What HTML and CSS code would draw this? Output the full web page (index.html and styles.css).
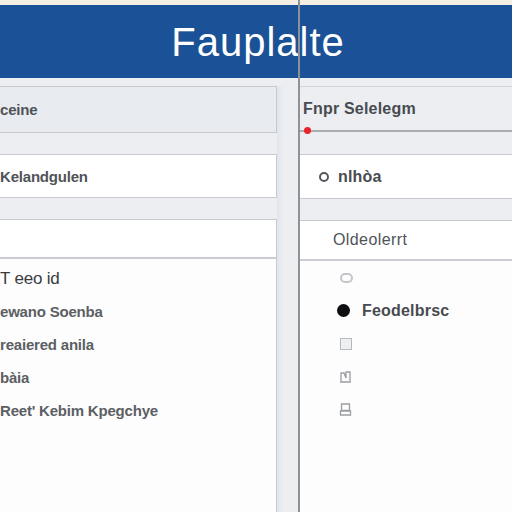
FILE: index.html
```html
<!DOCTYPE html>
<html>
<head>
<meta charset="utf-8">
<link rel="stylesheet" href="styles.css">
</head>
<body>
<div class="strip"></div>
<header class="header"><h1 class="title">Fauplalte</h1></header>
<div class="divider"></div>
<main class="main">
  <section class="left">
    <div class="box box-gray"><span class="label">ceine</span></div>
    <div class="box box-white"><span class="label">Kelandgulen</span></div>
    <div class="box box-list">
      <div class="list-head"></div>
      <ul class="list">
        <li class="item item-dark">T eeo id</li>
        <li class="item">ewano Soenba</li>
        <li class="item">reaiered anila</li>
        <li class="item">bàia</li>
        <li class="item">Reet' Kebim Kpegchye</li>
      </ul>
    </div>
  </section>
  <div class="gutter"></div>
  <section class="right">
    <div class="rbox rbox-gray">
      <span class="rlabel">Fnpr Selelegm</span>
      <div class="slider"><span class="knob"></span></div>
    </div>
    <div class="rbox rbox-white">
      <span class="radio"></span><span class="rlabel">nlhòa</span>
    </div>
    <div class="rbox rbox-list">
      <div class="rlist-head"><span class="rlabel">Oldeolerrt</span></div>
      <ul class="rlist">
        <li class="ritem"><span class="ico ico-pill"></span></li>
        <li class="ritem"><span class="ico ico-dot"></span><span class="rlabel">Feodelbrsc</span></li>
        <li class="ritem"><span class="ico ico-square"></span></li>
        <li class="ritem"><svg class="ico-svg" width="13" height="13" viewBox="0 0 13 13"><path d="M1 12h11M2 11V3h3l2 5V2h4v9" fill="none" stroke="#9a9da2" stroke-width="1.3"/></svg></li>
        <li class="ritem"><svg class="ico-svg" width="13" height="13" viewBox="0 0 13 13"><path d="M2.5 1h8v6.5h-8zM1.5 8h10v4h-10z" fill="none" stroke="#9a9da2" stroke-width="1.3"/></svg></li>
      </ul>
    </div>
  </section>
</main>
</body>
</html>
```
FILE: styles.css
```css
* { box-sizing: border-box; }
html, body { margin: 0; padding: 0; }
body {
  width: 512px;
  height: 512px;
  overflow: hidden;
  background: #eceef1;
  font-family: "Liberation Sans", Arial, sans-serif;
  position: relative;
}
.strip { height: 5px; background: #f4efe4; }
.header {
  height: 73px;
  background: #1b5196;
  display: flex;
  align-items: center;
  justify-content: center;
}
.title {
  margin: 0;
  color: #ffffff;
  font-family: "Liberation Sans", Arial, sans-serif;
  font-weight: normal;
  font-size: 40px;
  letter-spacing: 1px;
  padding-left: 4px;
  padding-top: 2px;
}
.divider {
  position: absolute;
  left: 298px;
  top: 0;
  bottom: 0;
  width: 2px;
  background: #8e9196;
}
.main {
  display: flex;
  height: 434px;
  padding-top: 8px;
}
.left {
  width: 277px;
  display: flex;
  flex-direction: column;
  gap: 21px;
}
.gutter {
  width: 23px;
  background: linear-gradient(to right, #dfe5ee 0, #e8ebf0 4px, #eceef1 8px);
}
.right {
  flex: 1;
  display: flex;
  flex-direction: column;
}
.box {
  border: 1px solid #c6cad0;
  border-left: none;
  display: flex;
  align-items: center;
}
.box-gray { height: 47px; background: #e8ebef; }
.box-white { height: 44px; background: #ffffff; }
.box-list {
  flex: 1;
  background: #fdfdfd;
  flex-direction: column;
  align-items: stretch;
  border-bottom: none;
}
.label {
  color: #505358;
  font-size: 15px;
  font-weight: bold;
  padding-left: 0;
  letter-spacing: -0.2px;
}
.list-head {
  height: 39px;
  border-bottom: 2px solid #c9cdd3;
  background: #ffffff;
}
.list {
  list-style: none;
  margin: 0;
  padding: 10px 0 0 0;
}
.item {
  height: 33px;
  line-height: 20px;
  font-size: 15px;
  font-weight: bold;
  color: #5c5f64;
  letter-spacing: -0.2px;
}
.item-dark { color: #3a3c40; font-size: 17px; font-weight: normal; }
.rbox { display: flex; align-items: center; }
.rbox-gray {
  height: 47px;
  background: #eceef1;
  border-top: 1px solid #d0d3d8;
  position: relative;
  padding-left: 3px;
  padding-bottom: 2px;
}
.slider {
  position: absolute;
  left: 0;
  right: 0;
  bottom: 1px;
  height: 2px;
  background: #a9acb1;
}
.knob {
  position: absolute;
  left: 4px;
  top: -3px;
  width: 7px;
  height: 7px;
  border-radius: 50%;
  background: #e8232a;
}
.rlabel {
  color: #484b50;
  font-size: 16px;
  font-weight: bold;
  letter-spacing: 0.2px;
}
.rbox-white {
  margin-top: 21px;
  height: 45px;
  background: #ffffff;
  border-top: 1px solid #c6cad0;
  border-bottom: 1px solid #c6cad0;
  padding-left: 19px;
  gap: 9px;
}
.radio {
  width: 10px;
  height: 10px;
  border: 2px solid #55585d;
  border-radius: 50%;
}
.rbox-list {
  margin-top: 21px;
  flex: 1;
  background: #fdfdfd;
  border-top: 1px solid #c6cad0;
  flex-direction: column;
  align-items: stretch;
}
.rlist-head {
  height: 40px;
  border-bottom: 2px solid #c9cdd3;
  display: flex;
  align-items: center;
  padding-left: 33px;
  background: #ffffff;
}
.rlist-head .rlabel { font-weight: normal; color: #505358; letter-spacing: 0.4px; }
.rlist {
  list-style: none;
  margin: 0;
  padding: 0 0 0 37px;
}
.ritem {
  height: 33px;
  display: flex;
  align-items: center;
  gap: 12px;
}
.ico { display: inline-block; }
.ico-pill {
  width: 13px;
  height: 10px;
  border: 2px solid #c4c6ca;
  border-radius: 5px;
  margin-left: 3px;
}
.ico-dot {
  width: 13px;
  height: 13px;
  border-radius: 50%;
  background: #0e0e10;
}
.ico-square {
  width: 12px;
  height: 12px;
  border: 1.5px solid #b8bbc0;
  background: #eeeff1;
  margin-left: 3px;
}
.ico-svg { margin-left: 2px; }
```
